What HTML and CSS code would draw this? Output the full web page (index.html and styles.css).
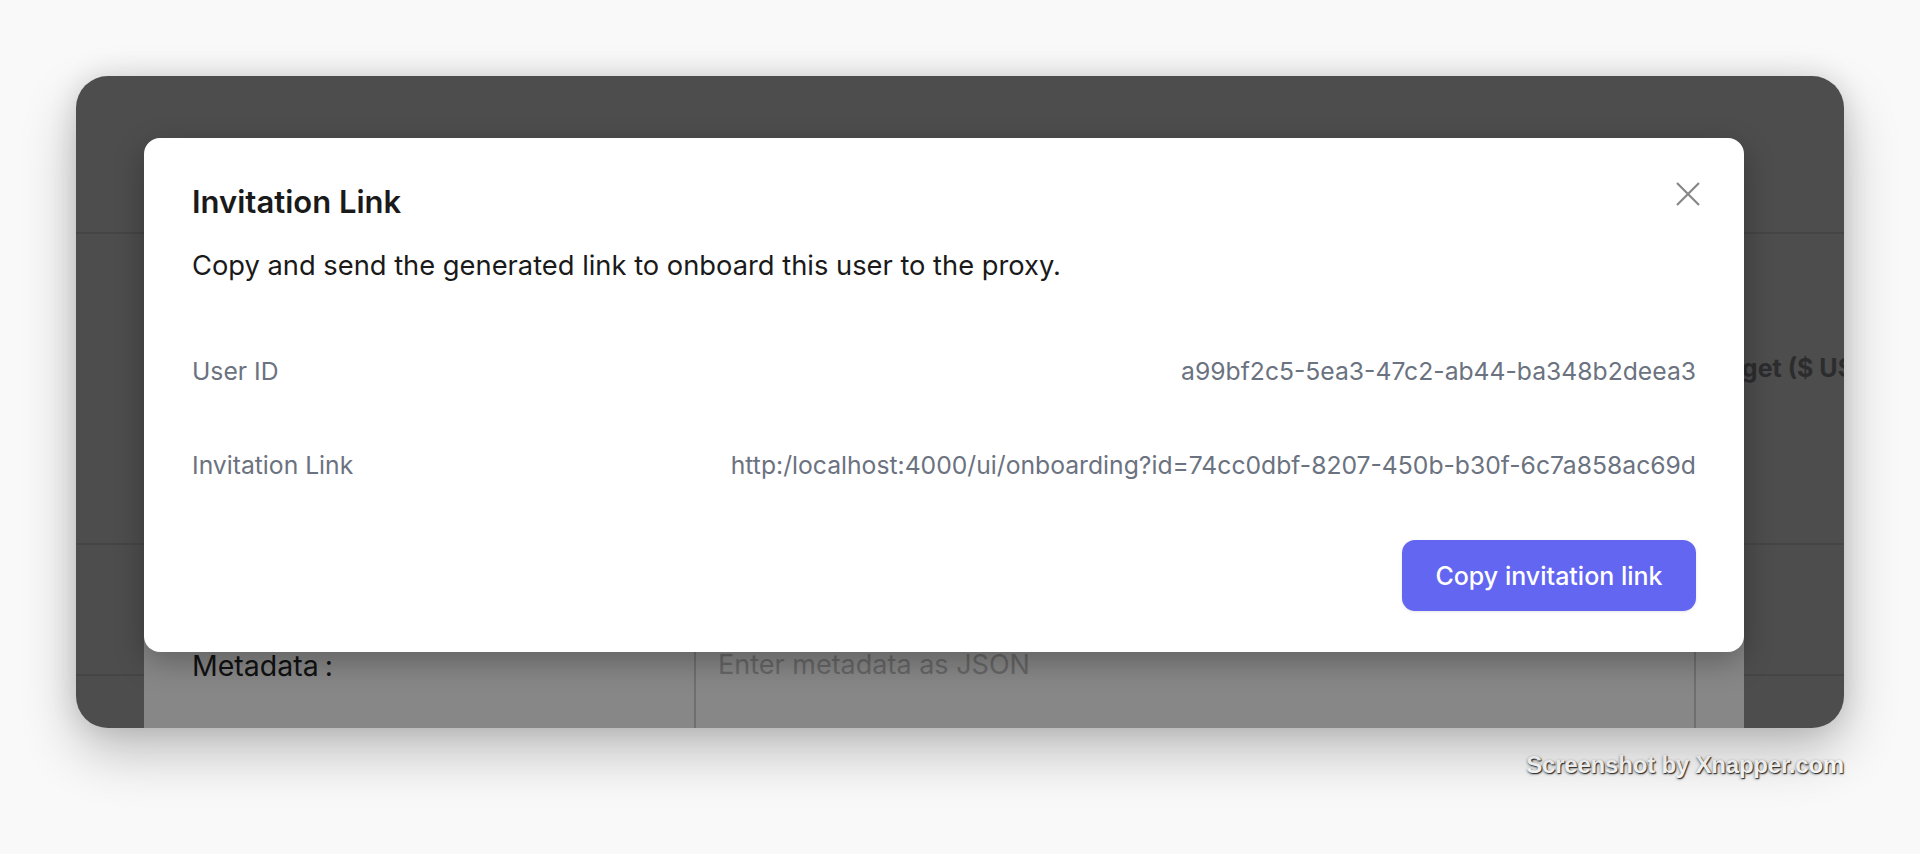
FILE: index.html
```html
<!DOCTYPE html>
<html lang="en">
<head>
<meta charset="utf-8">
<title>Invitation Link</title>
<link rel="stylesheet" href="styles.css">
</head>
<body>
<div class="stage">
  <div class="window">
    <div class="page">
      <div class="page-header"></div>
      <div class="page-row row-budget">
        <span class="budget-label">Budget ($ USD)</span>
      </div>
      <div class="page-row row-short"></div>
      <div class="page-row row-last"></div>
    </div>

    <div class="form-modal">
      <div class="form-row">
        <div class="form-label">Metadata<span class="colon">:</span></div>
        <div class="form-input">Enter metadata as JSON</div>
      </div>
    </div>

    <div class="modal">
      <button class="close" aria-label="Close">
        <svg width="26" height="26" viewBox="0 0 26 26"><path d="M2 2 L24 24 M24 2 L2 24" stroke="#878787" stroke-width="2.2" fill="none"/></svg>
      </button>
      <h2 class="modal-title">Invitation Link</h2>
      <p class="modal-desc">Copy and send the generated link to onboard this user to the proxy.</p>
      <div class="info-row first">
        <span class="info-label">User ID</span>
        <span class="info-value">a99bf2c5-5ea3-47c2-ab44-ba348b2deea3</span>
      </div>
      <div class="info-row">
        <span class="info-label">Invitation Link</span>
        <span class="info-value">http:/localhost:4000/ui/onboarding?id=74cc0dbf-8207-450b-b30f-6c7a858ac69d</span>
      </div>
      <div class="modal-actions">
        <button class="copy-btn">Copy invitation link</button>
      </div>
    </div>
  </div>
  <div class="caption">Screenshot by Xnapper.com</div>
</div>
</body>
</html>
```

FILE: styles.css
```css
* { box-sizing: border-box; }

html, body {
  margin: 0;
  padding: 0;
}

body {
  width: 1920px;
  height: 854px;
  overflow: hidden;
  background: #f9f9f9;
  font-family: Inter, "Noto Sans", sans-serif;
}

.stage {
  display: flex;
  flex-direction: column;
  align-items: flex-end;
  padding: 76px 76px 0 76px;
}

.window {
  position: relative;
  width: 1768px;
  height: 652px;
  border-radius: 32px;
  overflow: hidden;
  background: #4d4d4d;
  box-shadow: 0 24px 55px rgba(0, 0, 0, 0.24), 0 0 28px rgba(0, 0, 0, 0.12);
}

/* underlying page (under overlay) */
.page {
  display: flex;
  flex-direction: column;
  height: 100%;
}

.page-header {
  height: 158px;
  border-bottom: 2px solid #454545;
  flex: none;
}

.page-row {
  flex: none;
  border-bottom: 2px solid #454545;
  display: flex;
  align-items: center;
}

.row-budget {
  height: 311px;
  padding-left: 1618px;
  padding-bottom: 42px;
}

.row-short {
  height: 131px;
}

.row-last {
  border-bottom: none;
  flex: 1;
}

.budget-label {
  font-weight: 700;
  font-size: 25px;
  color: #2c2c2e;
  white-space: nowrap;
}

/* first modal behind the top one */
.form-modal {
  position: absolute;
  left: 68px;
  top: 420px;
  width: 1600px;
  bottom: 0;
  background: #878787;
  display: flex;
  flex-direction: column;
  justify-content: flex-end;
}

.form-row {
  display: flex;
  align-items: stretch;
  height: 150px;
}

.form-label {
  width: 550px;
  padding-left: 48px;
  padding-top: 70px;
  font-size: 28.5px;
  font-weight: 400;
  color: #111111;
}

.colon {
  margin-left: 6px;
}

.form-input {
  width: 1002px;
  border-left: 2px solid #6f6f6f;
  border-right: 2px solid #6f6f6f;
  border-top: 2px solid #6f6f6f;
  padding-left: 22px;
  padding-top: 68px;
  font-size: 27px;
  color: #666666;
}

/* top modal */
.modal {
  position: absolute;
  left: 68px;
  top: 62px;
  width: 1600px;
  height: 514px;
  background: #ffffff;
  border-radius: 16px;
  padding: 46px 48px 0 48px;
  box-shadow: 0 10px 30px rgba(0, 0, 0, 0.28);
  display: flex;
  flex-direction: column;
}

.close {
  position: absolute;
  top: 43px;
  right: 43px;
  width: 26px;
  height: 26px;
  padding: 0;
  border: none;
  background: none;
  display: flex;
}

.modal-title {
  margin: 0;
  font-size: 31px;
  line-height: 36px;
  font-weight: 600;
  color: #1a1a1a;
}

.modal-desc {
  margin: 28px 0 0 0;
  font-size: 27.3px;
  line-height: 36px;
  color: #1a1a1a;
}

.info-row {
  display: flex;
  justify-content: space-between;
  align-items: center;
  height: 30px;
  margin-top: 64px;
  font-size: 24.7px;
  color: #6b7280;
}

.info-row.first {
  margin-top: 72px;
}

.modal-actions {
  display: flex;
  justify-content: flex-end;
  margin-top: 60px;
}

.copy-btn {
  width: 294px;
  height: 71px;
  border: none;
  border-radius: 13px;
  background: #6366f1;
  color: #ffffff;
  font-family: Inter, "Noto Sans", sans-serif;
  font-size: 25px;
  font-weight: 500;
  box-shadow: 0 1px 3px rgba(0, 0, 0, 0.1);
}

.caption {
  margin-top: 23px;
  font-family: "Liberation Sans", Arial, sans-serif;
  font-weight: 700;
  font-size: 24px;
  line-height: 28px;
  color: #ffffff;
  letter-spacing: -0.2px;
  text-shadow: 1px 1px 1px rgba(0, 0, 0, 0.75), 0 1px 3px rgba(0, 0, 0, 0.5);
}
```
